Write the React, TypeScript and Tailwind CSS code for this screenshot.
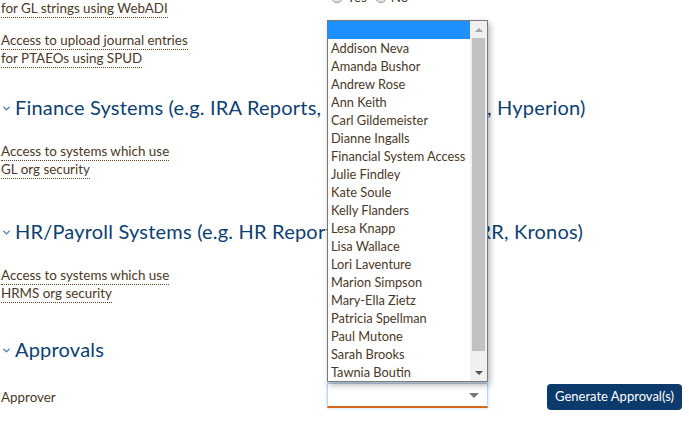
import { ChevronDown } from 'lucide-react';

const approvers = [
  'Addison Neva',
  'Amanda Bushor',
  'Andrew Rose',
  'Ann Keith',
  'Carl Gildemeister',
  'Dianne Ingalls',
  'Financial System Access',
  'Julie Findley',
  'Kate Soule',
  'Kelly Flanders',
  'Lesa Knapp',
  'Lisa Wallace',
  'Lori Laventure',
  'Marion Simpson',
  'Mary-Ella Zietz',
  'Patricia Spellman',
  'Paul Mutone',
  'Sarah Brooks',
  'Tawnia Boutin',
];

function Label({ lines }: { lines: string[] }) {
  return (
    <div className="flex flex-col items-start text-[13.4px] leading-[17px] text-[#4a3826]">
      {lines.map((l) => (
        <span key={l} className="border-b border-dotted border-[#6b3e1e]">{l}</span>
      ))}
    </div>
  );
}

function Heading({ children }: { children: React.ReactNode }) {
  return (
    <h2 className="flex items-center h-7 text-[20px] text-[#0b3f73] tracking-[0.2px] whitespace-nowrap">
      <ChevronDown size={11} strokeWidth={3} className="text-[#4d7aa8] mr-[3px] mt-[3px]" />
      {children}
    </h2>
  );
}

export default function App() {
  return (
    <div className="relative w-[689px] h-[422px] overflow-hidden bg-white font-['Lato',sans-serif] pl-[1px]">
      {/* previous field, scrolled off */}
      <div className="flex mt-[-18px]">
        <div className="w-[326px]">
          <Label lines={['Access to enter journal entries', 'for GL strings using WebADI']} />
        </div>
        <div className="flex items-center gap-2 text-[13.4px] text-[#4a3826] h-[18px] mt-[6px] pl-[4px]">
          <span className="flex items-center gap-1">
            <span className="w-[12px] h-[12px] rounded-full border border-[#999] bg-[#e5e5e5]" />
            Yes
          </span>
          <span className="flex items-center gap-1">
            <span className="w-[12px] h-[12px] rounded-full border border-[#999] bg-[#e5e5e5]" />
            No
          </span>
        </div>
      </div>

      <div className="mt-[14px]">
        <Label lines={['Access to upload journal entries', 'for PTAEOs using SPUD']} />
      </div>

      <div className="mt-[25px]">
        <Heading>Finance Systems (e.g. IRA Reports, Cognos, Oracle BI, Hyperion)</Heading>
      </div>

      <div className="mt-[22px]">
        <Label lines={['Access to systems which use', 'GL org security']} />
      </div>

      <div className="mt-[38px]">
        <Heading>HR/Payroll Systems (e.g. HR Reports, Cognos, PS, ORR, Kronos)</Heading>
      </div>

      <div className="mt-[22px]">
        <Label lines={['Access to systems which use', 'HRMS org security']} />
      </div>

      <div className="mt-[32px]">
        <Heading>Approvals</Heading>
      </div>

      <div className="flex items-start mt-[20px]">
        <div className="w-[326px] pt-[4px] text-[13.4px] text-[#4a3826]">Approver</div>
        <div className="relative w-[161px] h-[25px] bg-white border border-[#b9d4f0] border-b-2 border-b-[#d9641e] shadow-[0_0_3px_#b9d4f0]">
          <span className="absolute right-[8px] top-[9px] w-0 h-0 border-l-[5px] border-r-[5px] border-t-[5px] border-l-transparent border-r-transparent border-t-[#777]" />
        </div>
        <button className="ml-[59px] mt-[1px] w-[135px] h-[26px] rounded-[4px] bg-[#0b3a6b] text-white text-[13px]">
          Generate Approval(s)
        </button>
      </div>

      {/* open dropdown list */}
      <div className="absolute left-[327px] top-[20px] w-[161px] h-[362px] flex bg-white border border-[#7a7a7a] shadow-[2px_3px_6px_rgba(0,0,0,0.3)]">
        <ul className="flex-1 text-[12.8px] leading-[18px] text-[#4a3826]">
          <li className="h-[18px] bg-[#1e90ff]" />
          {approvers.map((a) => (
            <li key={a} className="h-[18px] pl-[3px] whitespace-nowrap">{a}</li>
          ))}
        </ul>
        <div className="w-[17px] flex flex-col items-center bg-[#f0f0f0]">
          <div className="h-[17px] flex items-center justify-center">
            <span className="w-0 h-0 border-l-[4px] border-r-[4px] border-b-[4px] border-l-transparent border-r-transparent border-b-[#a3a3a3]" />
          </div>
          <div className="w-[13px] h-[313px] bg-[#c1c1c1]" />
          <div className="flex-1" />
          <div className="h-[17px] flex items-center justify-center">
            <span className="w-0 h-0 border-l-[4px] border-r-[4px] border-t-[4px] border-l-transparent border-r-transparent border-t-[#505050]" />
          </div>
        </div>
      </div>
    </div>
  );
}
